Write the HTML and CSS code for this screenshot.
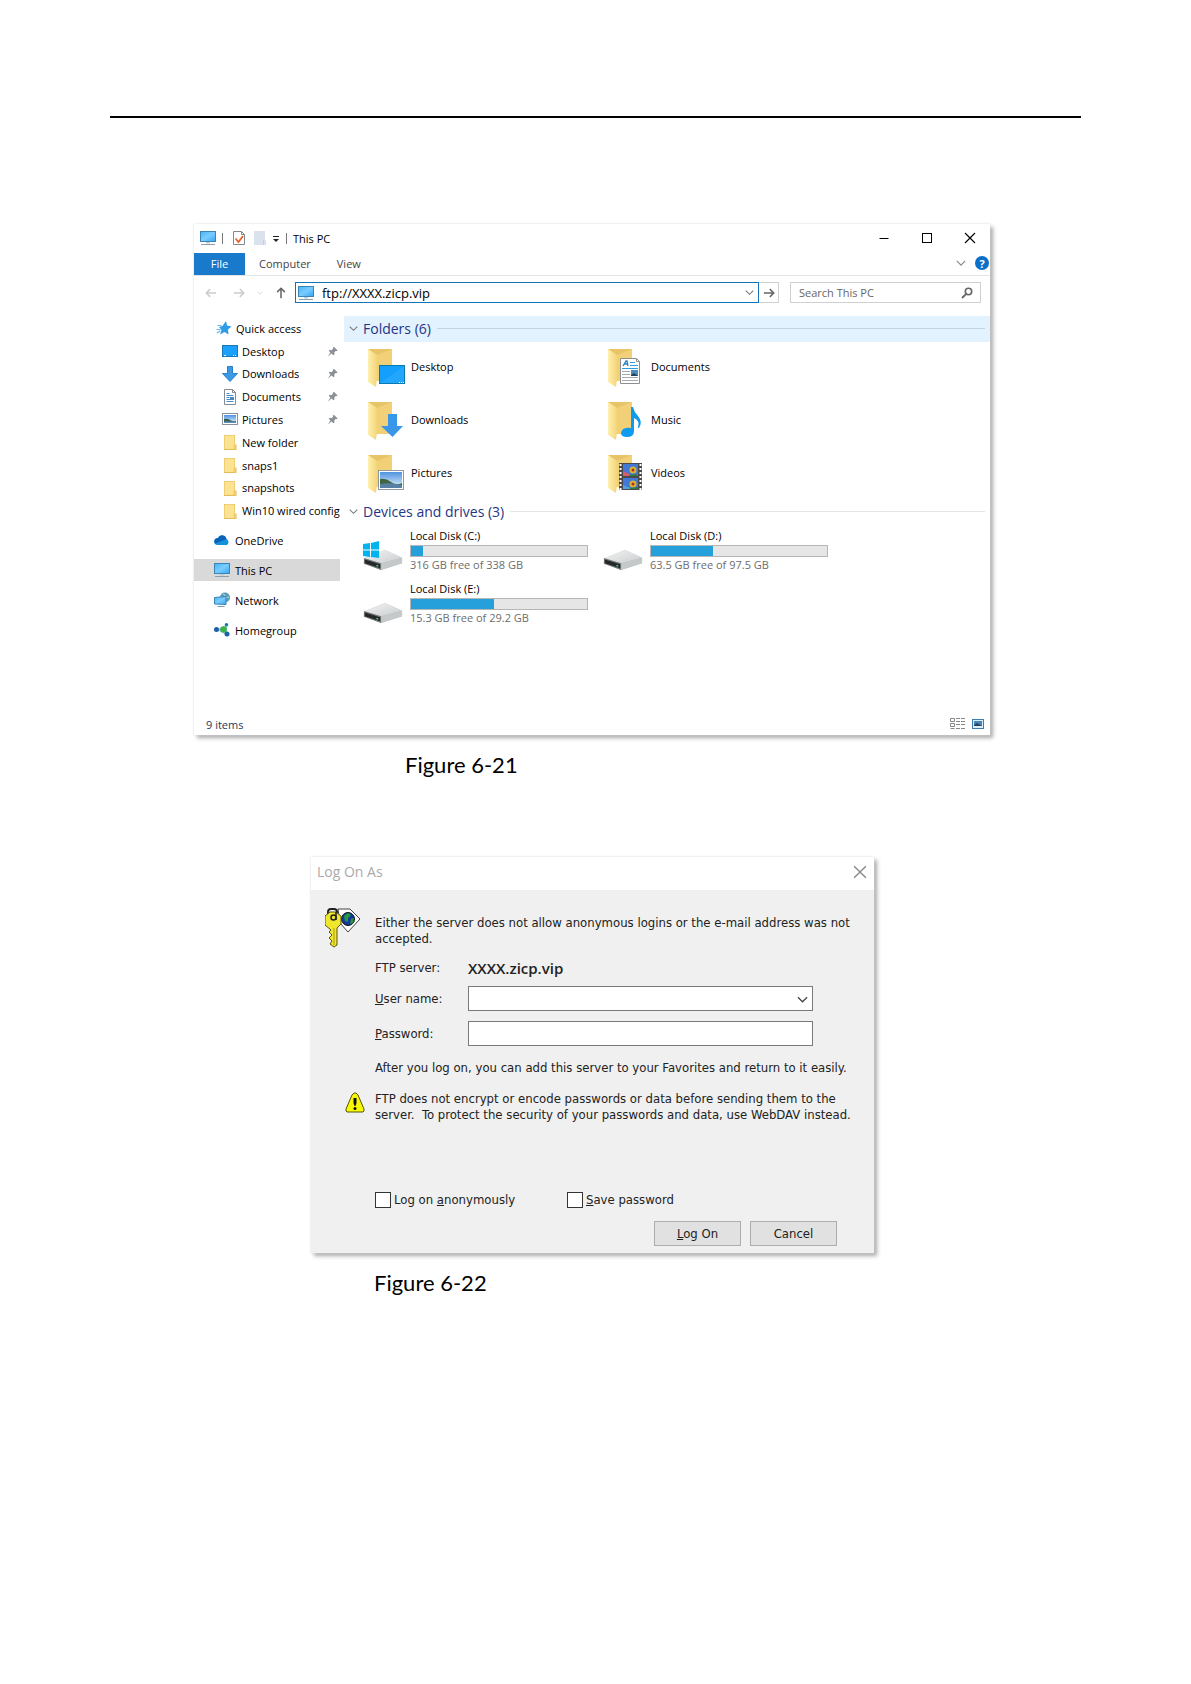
FILE: index.html
```
<!DOCTYPE html>
<html lang="en">
  <head>
    <meta charset="utf-8">
    <title>FTP access</title>
    <link rel="stylesheet" href="styles.css">
  </head>
  <body>
    <!-- shared icons -->
    <svg class="defs" width="0" height="0">
      <defs>
        <linearGradient id="blue" x1="0" y1="0" x2="1" y2="1"><stop offset="0" stop-color="#45b5f7"/><stop offset=".5" stop-color="#7accff"/><stop offset="1" stop-color="#32a6f2"/></linearGradient>
        <linearGradient id="gold" x1="0" y1="0" x2="1" y2="0"><stop offset="0" stop-color="#fff0b0"/><stop offset="1" stop-color="#f4d578"/></linearGradient>
        <linearGradient id="sky" x1="0" y1="0" x2="0" y2="1"><stop offset="0" stop-color="#4f93e0"/><stop offset="1" stop-color="#e4f3fb"/></linearGradient>
        <linearGradient id="metal" x1="0" y1="0" x2="1" y2="1"><stop offset="0" stop-color="#f4f5f5"/><stop offset="1" stop-color="#c9cccd"/></linearGradient>
        <symbol id="pc" viewBox="0 0 16 16">
          <rect x=".5" y="1.5" width="15" height="10" fill="url(#blue)" stroke="#3b84b5"/>
          <path d="M6 12h4v1.5H6z" fill="#b9ccd8"/><path d="M1 14.5h14" stroke="#8d9daa"/>
        </symbol>
        <symbol id="desk" viewBox="0 0 16 16">
          <rect x=".5" y="2.5" width="15" height="11" fill="#1ba0fb" stroke="#1878b8"/>
          <path d="M2 12.5h2M11 12.5h1M13 12.5h1" stroke="#fff"/>
        </symbol>
        <symbol id="down" viewBox="0 0 16 16">
          <path d="M5.5.5h5v7h5L8 15.5.5 7.5h5z" fill="#3b99e8" stroke="#2b7fc7"/>
        </symbol>
        <symbol id="doc" viewBox="0 0 16 16">
          <path d="M2.5.5h8l3 3v12h-11z" fill="#fff" stroke="#868b90"/><path d="M10.5.5v3h3" fill="none" stroke="#868b90"/>
          <path d="M4.5 4.5h3M4.5 6.5h7M4.5 8.5h3M4.5 10.5h7M4.5 12.5h7" stroke="#3c8dc9"/><rect x="8" y="8" width="4" height="3" fill="#4a88c0"/>
        </symbol>
        <symbol id="pic" viewBox="0 0 16 16">
          <rect x=".5" y="2.5" width="15" height="11" fill="#fff" stroke="#8c9299"/>
          <rect x="2" y="4" width="12" height="8" fill="url(#sky)"/><path d="M2 8q3-1 6 1t6 1v1H2z" fill="#385c4d"/><path d="M2 10.5h12V12H2z" fill="#5b93bd"/>
        </symbol>
        <symbol id="fold" viewBox="0 0 16 16">
          <path d="M2 1h11v9.5h1.5V16H2z" fill="#e3bb58"/><path d="M2.5 1.5h10V15h-10z" fill="#fce391"/><path d="M11.5 11H14v4.5h-2.5z" fill="#f0cb66"/>
        </symbol>
        <symbol id="pin" viewBox="0 0 16 16">
          <path d="M10 1l5.500 5.500-1.500 1-1-.5-2.500 2.500.5 2.500-1.500 1.500L6.500 11 1 15.500 5 9.500 2.500 7 4 5.500l2.500.5L9 3.500 8.500 2.500z" fill="#8a9095"/>
        </symbol>
        <symbol id="chev" viewBox="0 0 12 12"><path d="M1 3.5l5 5 5-5" fill="none" stroke="currentColor" stroke-width="1.4"/></symbol>
        <symbol id="arrow" viewBox="0 0 14 14"><path d="M1 7h11M8 2.5L12.5 7 8 11.5" fill="none" stroke="currentColor" stroke-width="1.8"/></symbol>
        <symbol id="cross" viewBox="0 0 12 12"><path d="M1 1l10 10M11 1L1 11" fill="none" stroke="currentColor" stroke-width="1.2"/></symbol>
        <!-- open folder, left part of every library icon -->
        <symbol id="lib" viewBox="0 0 40 40">
          <path d="M0 1h24v32H8z" fill="#f1d077"/><path d="M0 1h24l-15 6z" fill="#e8c468"/><path d="M0 1l9 6v24l-1 8-8-5z" fill="url(#gold)"/>
        </symbol>
        <symbol id="drive" viewBox="0 0 40 22">
          <path d="M0 9L22 0l18 8v6L18 21 0 14z" fill="#b4b8ba"/><path d="M0 9L22 0l18 8-22 6z" fill="url(#metal)"/>
          <path d="M18 14l22-6v6l-22 7z" fill="#c6c9ca"/><path d="M0 8.5L18 14v7L0 14.5z" fill="#75797b"/><path d="M1 10l16 5v4L1 14z" fill="#25282a"/><path d="M13 15.5l2 .6v1.5l-2-.6z" fill="#55c66d"/>
        </symbol>
      </defs>
    </svg>

    <header class="page_head"></header>

    <main>
      <section class="explorer">
        <div class="titlebar">
          <svg class="ic"><use href="#pc"/></svg>
          <span class="bar"></span>
          <svg class="ic check" viewBox="0 0 16 16"><path d="M2.5 1.5h8l3 3v10h-11z" fill="#fff" stroke="#85888b"/><path d="M10.5 1.5v3h3" fill="none" stroke="#85888b"/><path d="M4.5 8.5L7.500 12 12 6" fill="none" stroke="#e8622c" stroke-width="1.8"/></svg>
          <svg class="ic" viewBox="0 0 16 16"><path d="M2 1h11v9h1v5H2z" fill="#dbe1ed"/><path d="M11.5 10v5" stroke="#c5cedd"/></svg>
          <svg class="tiny" viewBox="0 0 8 8"><path d="M1 1.5h6" stroke="#222"/><path d="M1 4h6L4 7z" fill="#222"/></svg>
          <span class="bar"></span>
          <span class="name">This PC</span>
          <button class="plain win" aria-label="Minimize"><svg viewBox="0 0 12 12"><path d="M1.5 6.5h9" stroke="#000"/></svg></button>
          <button class="plain win" aria-label="Maximize"><svg viewBox="0 0 12 12"><rect x="1.5" y="1.5" width="9" height="9" fill="none" stroke="#000"/></svg></button>
          <button class="plain win" aria-label="Close"><svg><use href="#cross"/></svg></button>
        </div>

        <nav class="tabs">
          <a class="tab file" href="#">File</a>
          <a class="tab" href="#">Computer</a>
          <a class="tab" href="#">View</a>
          <button class="plain expand" aria-label="Expand ribbon"><svg><use href="#chev"/></svg></button>
          <button class="plain help" aria-label="Help">?</button>
        </nav>

        <div class="address">
          <button class="plain nav back off" aria-label="Back"><svg class="left"><use href="#arrow"/></svg></button>
          <button class="plain nav off" aria-label="Forward"><svg><use href="#arrow"/></svg></button>
          <button class="plain recent off" aria-label="Recent"><svg><use href="#chev"/></svg></button>
          <button class="plain nav" aria-label="Up"><svg class="up"><use href="#arrow"/></svg></button>
          <div class="box url">
            <svg class="ic"><use href="#pc"/></svg>
            <input type="text" value="ftp://XXXX.zicp.vip" aria-label="Address">
            <svg class="small"><use href="#chev"/></svg>
          </div>
          <button class="plain go" aria-label="Go"><svg><use href="#arrow"/></svg></button>
          <div class="box search">
            <input type="text" placeholder="Search This PC" aria-label="Search This PC">
            <svg class="lens" viewBox="0 0 12 12"><circle cx="7.5" cy="4.5" r="3.2" fill="none" stroke="#666" stroke-width="1.6"/><path d="M5.2 6.8L1 11" stroke="#666" stroke-width="1.8"/></svg>
          </div>
        </div>

        <div class="content">
          <nav class="side">
            <div class="quick">
              <a class="top" href="#"><svg class="ic" viewBox="0 0 16 16"><path d="M10 1l1 4.500 4.500 1-3.500 3 .5 5L8.500 12 4 14.500 5.500 10 3 7l3.500-1z" fill="#2f9ce8"/><path d="M1.5 5.500h4M.5 9.500h4M1 13l3-2" stroke="#5db4ee" stroke-width="1.200"/></svg>Quick access</a>
              <a href="#"><svg class="ic"><use href="#desk"/></svg><span>Desktop</span><svg class="pin"><use href="#pin"/></svg></a>
              <a href="#"><svg class="ic"><use href="#down"/></svg><span>Downloads</span><svg class="pin"><use href="#pin"/></svg></a>
              <a href="#"><svg class="ic"><use href="#doc"/></svg><span>Documents</span><svg class="pin"><use href="#pin"/></svg></a>
              <a href="#"><svg class="ic"><use href="#pic"/></svg><span>Pictures</span><svg class="pin"><use href="#pin"/></svg></a>
              <a href="#"><svg class="ic"><use href="#fold"/></svg>New folder</a>
              <a href="#"><svg class="ic"><use href="#fold"/></svg>snaps1</a>
              <a href="#"><svg class="ic"><use href="#fold"/></svg>snapshots</a>
              <a href="#"><svg class="ic"><use href="#fold"/></svg>Win10 wired config</a>
            </div>
            <div class="places">
              <a href="#"><svg class="ic" viewBox="0 0 16 16"><path d="M4 6a4.500 4.500 0 0 1 8.500 1A3.500 3.500 0 0 1 13 13H3.500A3.500 3.500 0 0 1 4 6z" fill="#1490df"/><path d="M4 6a4.500 4.500 0 0 1 8.500 1L6.500 9.500 1 11.500A3.500 3.500 0 0 1 4 6z" fill="#0a63b8"/></svg>OneDrive</a>
              <a class="on" href="#"><svg class="ic"><use href="#pc"/></svg>This PC</a>
              <a href="#"><svg class="ic" viewBox="0 0 16 16"><circle cx="11" cy="5.500" r="5" fill="#5b9cb5"/><path d="M9 2q3 1 3 4l3-1" stroke="#b6dce7" fill="none"/><path d="M.5 5.500l11.500-1v8l-11.500-.5z" fill="url(#blue)" stroke="#3b84b5"/><path d="M3.500 14.500h7" stroke="#7ba0b5"/></svg>Network</a>
              <a href="#"><svg class="ic" viewBox="0 0 16 16"><path d="M3 7.500l10-5v11z" fill="#a9cfc0"/><circle cx="2.500" cy="7.500" r="2.500" fill="#1c5faa"/><circle cx="9.500" cy="7.500" r="3.300" fill="#39b44a"/><circle cx="12.500" cy="2.800" r="1.800" fill="#1b75b8"/><circle cx="13" cy="12" r="2.500" fill="#1c5faa"/></svg>Homegroup</a>
            </div>
          </nav>

          <div class="files">
            <h2 class="group hot"><svg class="small"><use href="#chev"/></svg>Folders (6)</h2>
            <div class="grid">
              <a class="item" href="#"><svg viewBox="0 0 40 40"><use href="#lib"/><rect x="11.5" y="17.5" width="25" height="18" fill="#149ffc" stroke="#087aad"/><path d="M12 35L36 18v17z" fill="#31adff" opacity=".5"/><path d="M31 34.5h1M33 34.5h1M35 34.5h1" stroke="#fff"/></svg><span>Desktop</span></a>
              <a class="item" href="#"><svg viewBox="0 0 40 40"><use href="#lib"/><path d="M12.5 10.5h16l3 3v22h-19z" fill="#fff" stroke="#8b8f93"/><path d="M28.5 10.5v3h3" fill="none" stroke="#8b8f93"/><path d="M15 18l3-5h1l1 5M16.5 16h3" fill="none" stroke="#2a82c8" stroke-width="1.3"/><path d="M22 14.5h5M22 17.5h8M14 20.5h16" stroke="#2a9de0"/><path d="M14 23.5h8M14 26.5h8M14 29.5h16M14 32.5h16" stroke="#a5a9ad"/><rect x="23" y="22" width="7" height="6" fill="#4b8bc4"/><path d="M23 27l3-2 4 3h-7z" fill="#25425d"/></svg><span>Documents</span></a>
              <a class="item" href="#"><svg viewBox="0 0 40 40"><use href="#lib"/><path d="M20 13h9v12h6L24.5 36 13 25h7z" fill="#3997e9"/></svg><span>Downloads</span></a>
              <a class="item" href="#"><svg viewBox="0 0 40 40"><use href="#lib"/><path d="M23 6h2q1 5 5 9 5 6 1 12h-1q2-8-4-10v13q0 6-7 6-6 0-6-4 1-6 10-5z" fill="#0e9aef"/></svg><span>Music</span></a>
              <a class="item" href="#"><svg viewBox="0 0 40 40"><use href="#lib"/><rect x="10.5" y="16.5" width="25" height="19" fill="#fff" stroke="#8f98a3"/><rect x="12" y="18" width="22" height="16" fill="url(#sky)"/><path d="M12 25q6-1 11 3t11 1v2H12z" fill="#41653d"/><path d="M12 30q10-2 22 1v3H12z" fill="#5681a4"/></svg><span>Pictures</span></a>
              <a class="item" href="#"><svg viewBox="0 0 40 40"><use href="#lib"/><rect x="11" y="9" width="23" height="27" fill="#4b4a4a"/><rect x="15" y="10" width="15" height="12" fill="#4278d7"/><rect x="15" y="24" width="15" height="11" fill="#4278d7"/><path d="M12.5 10v26M32.5 10v26" stroke="#fff" stroke-width="2" stroke-dasharray="2 2"/><circle cx="25" cy="16" r="3.5" fill="#ddb52d"/><circle cx="25" cy="16" r="1.5" fill="#ad3027"/><path d="M15 17l6 3v2h-6z" fill="#d95b68"/><path d="M22 21l6-1 2 2h-8z" fill="#2d7e38"/><circle cx="25" cy="30" r="3.5" fill="#ddb52d"/><circle cx="25" cy="30" r="1.5" fill="#ad3027"/><path d="M15 31l7 3v1h-7z" fill="#55a1de"/><path d="M22 34l8-1v2h-8z" fill="#2d7e38"/></svg><span>Videos</span></a>
            </div>

            <h2 class="group"><svg class="small"><use href="#chev"/></svg>Devices and drives (3)</h2>
            <div class="grid drives">
              <a class="disk" href="#">
                <svg viewBox="0 0 40 30"><use href="#drive" y="9" width="40" height="21"/><path d="M0 3l7-1v6.500H0zM8 2l8-2v8.500H8zM0 9.500h7V16l-7-1zM8 9.500h8V17l-8-1z" fill="#00b4f0"/></svg>
                <div class="info">Local Disk (C:)<div class="meter"><div style="width:7%"></div></div><small>316 GB free of 338 GB</small></div>
              </a>
              <a class="disk" href="#">
                <svg viewBox="0 0 40 30"><use href="#drive" y="9" width="40" height="21"/></svg>
                <div class="info">Local Disk (D:)<div class="meter"><div style="width:35%"></div></div><small>63.5 GB free of 97.5 GB</small></div>
              </a>
              <a class="disk" href="#">
                <svg viewBox="0 0 40 30"><use href="#drive" y="9" width="40" height="21"/></svg>
                <div class="info">Local Disk (E:)<div class="meter"><div style="width:47%"></div></div><small>15.3 GB free of 29.2 GB</small></div>
              </a>
            </div>
          </div>
        </div>

        <footer class="status">
          <span>9 items</span>
          <button class="plain" aria-label="Details"><svg class="ic" viewBox="0 0 16 16"><path d="M.5 2.500h4v3h-4zM.5 7.500h4v3h-4zM.5 12.500h4" fill="none" stroke="#888"/><path d="M6 2.500h4M11 2.500h4M6 5.500h4M11 5.500h4M6 8.500h4M11 8.500h4M6 12.500h4M11 12.500h4" stroke="#888"/></svg></button>
          <button class="plain view" aria-label="Large icons"><svg viewBox="0 0 12 12"><rect x=".5" y="1.5" width="11" height="9" fill="#d9effb" stroke="#3c7fae"/><rect x="2" y="3" width="8" height="5" fill="#4b86b4"/><path d="M2 7l3-2 5 3H2z" fill="#22435c"/></svg></button>
        </footer>
      </section>
      <p class="caption first">Figure 6-21</p>

      <form class="dialog">
        <div class="dialog_title">
          <span>Log On As</span>
          <button type="button" class="plain" aria-label="Close"><svg><use href="#cross"/></svg></button>
        </div>
        <div class="dialog_body">
          <div class="row intro">
            <svg class="key" viewBox="0 0 36 40">
              <path d="M13 1h12l10 10-12 13-8-9z" fill="#fff" stroke="#444"/>
              <circle cx="23" cy="11" r="6.5" fill="#123a9c" stroke="#111"/><path d="M19 8l4-3 3 2-3 3v4l-3-1zM26 11l3-1-1 5-3 1z" fill="#249a3a"/>
              <path d="M3 7V4q0-3 3-3h3q3 0 3 3v3" fill="none" stroke="#222" stroke-width="2"/>
              <path d="M5 4h6l5 4v8l-4 4v17l-3 2-4-3 2-3-3-3 3-3-3-3 2-2-6-5V8z" fill="#f0e62e" stroke="#5a5510"/>
              <path d="M9 20v17" stroke="#a79d18"/><circle cx="8.5" cy="9.5" r="2.5" fill="none" stroke="#222" stroke-width="1.5"/><path d="M11 4v8" stroke="#222" stroke-width="1.5"/>
            </svg>
            <p>Either the server does not allow anonymous logins or the e-mail address was not<br>accepted.</p>
          </div>
          <div class="fields">
            <span>FTP server:</span><span class="host">XXXX.zicp.vip</span>
            <label for="user"><u>U</u>ser name:</label>
            <div class="pick"><select id="user"><option></option></select><svg><use href="#chev"/></svg></div>
            <label for="pass"><u>P</u>assword:</label>
            <input type="password" id="pass">
          </div>
          <p class="after">After you log on, you can add this server to your Favorites and return to it easily.</p>
          <div class="row warn">
            <svg class="alert" viewBox="0 0 20 21"><path d="M9 1h2l2 2 6 14v2l-1 1H2l-1-1v-2L7 3z" fill="#f8f800" stroke="#55550a"/><path d="M8.5 6h3v5l-1 3h-1l-1-3z" fill="#111"/><circle cx="10" cy="16.5" r="1.5" fill="#111"/></svg>
            <p>FTP does not encrypt or encode passwords or data before sending them to the<br>server.&nbsp; To protect the security of your passwords and data, use WebDAV instead.</p>
          </div>
          <div class="checks">
            <label><input type="checkbox"><span>Log on <u>a</u>nonymously</span></label>
            <label><input type="checkbox"><span><u>S</u>ave password</span></label>
          </div>
          <div class="buttons">
            <button type="button"><u>L</u>og On</button>
            <button type="button">Cancel</button>
          </div>
        </div>
      </form>
      <p class="caption second">Figure 6-22</p>
    </main>
  </body>
</html>
```
FILE: styles.css
```
* {
  box-sizing: border-box;
}

body {
  margin: 0;
  padding: 0 110px 80px;
  background: #fff;
  color: #000;
  font-family: "Open Sans", "Noto Sans", sans-serif;
  font-size: 11px;
}

.defs {
  position: absolute;
}

a {
  color: inherit;
  text-decoration: none;
}

p, h2 {
  margin: 0;
}

svg {
  display: block;
  flex: none;
}

input, select, button {
  font: inherit;
  color: inherit;
}

.plain {
  display: flex;
  align-items: center;
  justify-content: center;
  padding: 0;
  border: 0;
  background: none;
}

.plain svg {
  width: 12px;
  height: 12px;
}

.plain .ic, .ic {
  width: 16px;
  height: 16px;
}

.small {
  width: 9px;
  height: 9px;
  color: #777;
}

.page_head {
  height: 118px;
  border-bottom: 2px solid #000;
  margin-bottom: 106px;
}

/* explorer window */
.explorer {
  max-width: 796px;
  margin-left: 84px;
  background: #fff;
  box-shadow: 0 0 2px #ddd, 3px 3px 4px #aaa;
}

.titlebar {
  display: flex;
  align-items: center;
  height: 29px;
  padding: 0 0 1px 6px;
}

.titlebar .bar {
  width: 1px;
  height: 11px;
  margin: 0 6px;
  background: #777;
}

.titlebar .check {
  margin: 0 5px 0 2px;
}

.titlebar .tiny {
  width: 8px;
  height: 8px;
  margin: 2px 0 0 4px;
}

.titlebar .name {
  flex: 1;
}

.titlebar .win {
  width: 40px;
  height: 28px;
  margin-left: 3px;
}

.tabs {
  display: flex;
  height: 23px;
  border-bottom: 1px solid #e4e4e4;
  color: #444;
}

.tab {
  line-height: 22px;
  margin-left: 26px;
}

.tab.file {
  width: 51px;
  margin: 0 -12px 0 0;
  background: #1979ca;
  color: #fff;
  text-align: center;
}

.tabs .expand {
  margin: 0 9px 2px auto;
  color: #888;
}

.tabs .expand svg {
  width: 10px;
  height: 10px;
}

.tabs .help {
  width: 14px;
  height: 14px;
  margin: 3px 1px 0 0;
  border-radius: 50%;
  background: #0b6fc7;
  color: #fff;
  font-weight: bold;
}

.address {
  display: flex;
  align-items: center;
  padding: 6px 9px 13px 10px;
}

.address .nav {
  width: 28px;
  color: #666;
}

.address .back {
  width: 14px;
  margin-right: 7px;
}

.address .off {
  color: #ccc;
}

.address .recent {
  width: 14px;
}

.address .recent svg {
  width: 6px;
  height: 6px;
}

.left {
  transform: rotate(180deg);
}

.up {
  transform: rotate(-90deg);
}

.box {
  display: flex;
  align-items: center;
  height: 21px;
  border: 1px solid #d0d0d0;
}

.box input {
  flex: 1;
  min-width: 0;
  height: 19px;
  padding: 0;
  border: 0;
  outline: 0;
  background: none;
}

.url {
  flex: 1;
  padding: 0 4px 0 2px;
  border-color: #1273b8;
}

.url input {
  padding-left: 8px;
  font-size: 13px;
}

.go {
  width: 20px;
  height: 21px;
  color: #666;
}

.address .go {
  border: 1px solid #d0d0d0;
  border-left: 0;
}

.search {
  width: 191px;
  margin-left: 11px;
  padding: 0 7px 0 8px;
}

.search input::placeholder {
  color: #666;
  opacity: 1;
}

.lens {
  width: 12px;
  height: 12px;
}

.content {
  display: flex;
}

.side {
  width: 150px;
  flex: none;
  overflow: hidden;
}

.side a {
  display: flex;
  align-items: center;
  gap: 4px;
  padding-left: 28px;
  white-space: nowrap;
}

.side span {
  flex: 1;
}

.quick {
  display: grid;
  grid-auto-rows: 1fr;
  height: 205px;
  width: 146px;
  margin: 1px 0 7px;
  overflow: hidden;
}

.quick .top {
  padding-left: 22px;
}

.side .pin {
  width: 11px;
  height: 11px;
  margin-right: 2px;
}

.places {
  display: grid;
  gap: 8px;
  width: 146px;
}

.places a {
  height: 22px;
  padding-left: 20px;
  gap: 5px;
}

.places .on {
  background: #d9d9d9;
}

.files {
  flex: 1;
  min-height: 397px;
}

.group {
  display: flex;
  align-items: center;
  gap: 5px;
  height: 26px;
  padding: 0 5px 1px;
  color: #263585;
  font-size: 14px;
  font-weight: normal;
}

.group:after {
  content: "";
  flex: 1;
  height: 1px;
  margin-left: 1px;
  background: #e3e6e8;
}

.group.hot {
  background: #e2f2fe;
}

.group.hot:after {
  background: #c4d5e0;
}

.grid {
  display: grid;
  grid-template-columns: 240px 240px;
  grid-auto-rows: 53px;
  padding-left: 24px;
}

.item {
  display: flex;
  gap: 3px;
  padding-top: 6px;
}

.item svg {
  width: 40px;
  height: 40px;
}

.item span {
  line-height: 38px;
}

.hot + .grid {
  margin-bottom: -2px;
}

.drives {
  padding-left: 19px;
}

.disk {
  display: flex;
  gap: 7px;
  padding-top: 3px;
}

.disk svg {
  width: 40px;
  height: 30px;
  margin-top: 13px;
}

.info {
  width: 178px;
  line-height: 15px;
}

.meter {
  height: 12px;
  margin: 2px 0 0;
  border: 1px solid #b6b6b6;
  background: #e6e6e6;
}

.meter div {
  height: 100%;
  background: #26a0da;
}

.info small {
  display: block;
  color: #6d6d6d;
  font-size: 11px;
}

.status {
  display: flex;
  align-items: center;
  gap: 6px;
  height: 22px;
  padding: 0 6px 0 12px;
  color: #1e395b;
}

.status span {
  flex: 1;
}

.caption {
  font-family: Lato, "Open Sans", sans-serif;
  font-size: 22px;
  line-height: 28px;
}

.caption.first {
  margin: 16px 0 78px 295px;
}

.caption.second {
  margin: 16px 0 0 264px;
}

/* log on dialog */
.dialog {
  max-width: 563px;
  margin-left: 201px;
  background: #f0f0f0;
  box-shadow: 0 0 2px #ddd, 3px 3px 4px #aaa;
  color: #222;
  font-family: "DejaVu Sans Condensed", "DejaVu Sans", sans-serif;
  font-size: 13px;
  line-height: 16px;
}

.dialog_title {
  display: flex;
  align-items: center;
  justify-content: space-between;
  height: 33px;
  padding: 0 7px 3px 6px;
  background: #fff;
  color: #aaa;
  font-family: "Open Sans", sans-serif;
  font-size: 14px;
}

.dialog_title .plain {
  color: #888;
}

.dialog_title .plain svg {
  width: 14px;
  height: 14px;
}

.dialog_body {
  padding: 18px 4px 7px 14px;
}

.row {
  display: flex;
}

.key {
  width: 36px;
  height: 40px;
  margin-right: 14px;
}

.intro p {
  padding-top: 7px;
}

.fields {
  display: grid;
  grid-template-columns: 93px minmax(0, 345px);
  grid-template-rows: 16px 25px 25px;
  row-gap: 10px;
  align-items: center;
  margin: 12px 0 0 50px;
}

.host {
  font-family: "Open Sans", sans-serif;
  font-size: 15px;
  font-weight: 600;
}

.fields input, .fields select {
  display: block;
  width: 100%;
  height: 25px;
  border: 1px solid #7a7a7a;
  border-radius: 0;
  background: #fff;
  appearance: none;
}

.pick {
  position: relative;
}

.pick svg {
  position: absolute;
  top: 8px;
  right: 5px;
  width: 11px;
  height: 11px;
  color: #444;
  pointer-events: none;
}

.after {
  margin: 14px 0 0 50px;
}

.warn {
  margin-top: 15px;
  padding-left: 20px;
}

.alert {
  width: 20px;
  height: 21px;
  margin: 1px 10px 0 0;
}

.checks {
  display: grid;
  grid-template-columns: 192px 1fr;
  margin: 69px 0 0 50px;
}

.checks label {
  display: flex;
  align-items: center;
  gap: 3px;
}

.checks input {
  width: 16px;
  height: 16px;
  margin: 0;
  border: 1px solid #333;
  background: #fff;
  appearance: none;
}

.buttons {
  display: flex;
  justify-content: flex-end;
  gap: 9px;
  margin: 13px 33px 0 0;
}

.buttons button {
  width: 87px;
  height: 25px;
  padding: 0;
  border: 1px solid #adadad;
  background: #e1e1e1;
}
```
